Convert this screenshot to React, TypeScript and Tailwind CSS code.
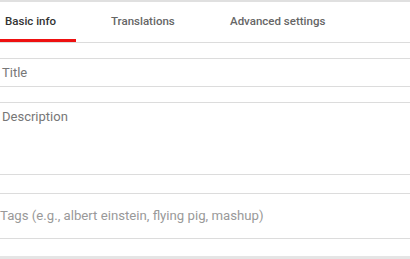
export default function App() {
  const font = { fontFamily: "Roboto, 'Liberation Sans', sans-serif" };
  return (
    <div className="w-[410px] h-[259px] bg-white overflow-hidden flex flex-col" style={font}>
      <div className="h-[2px] bg-[#e0e0e0]" />
      <div className="h-[41px] flex border-b border-[#dcdcdc]">
        <div className="relative w-[76px] flex items-center pl-[5px] text-[11.5px] font-medium text-[#333]">
          Basic info
          <div className="absolute left-0 right-0 bottom-0 h-[3px] bg-[#ee1111]" />
        </div>
        <div className="w-[154px] flex items-center pl-[35px] text-[11.5px] font-medium text-[#666]">Translations</div>
        <div className="flex items-center text-[11.5px] font-medium text-[#666]">Advanced settings</div>
      </div>
      <div className="h-[15px]" />
      <div className="h-[29px] border-y border-[#dcdcdc] flex items-center pl-[2px] text-[13px] text-[#777]">Title</div>
      <div className="h-[15px]" />
      <div className="h-[73px] border-y border-[#dcdcdc] pl-[2px] pt-[4px] text-[13px] text-[#777]">Description</div>
      <div className="h-[18px]" />
      <div className="h-[46px] border-y border-[#dcdcdc] flex items-center text-[13.2px] text-[#999]">
        Tags (e.g., albert einstein, flying pig, mashup)
      </div>
      <div className="h-[17px]" />
      <div className="flex-1 bg-[#e5e5e5]" />
    </div>
  );
}
